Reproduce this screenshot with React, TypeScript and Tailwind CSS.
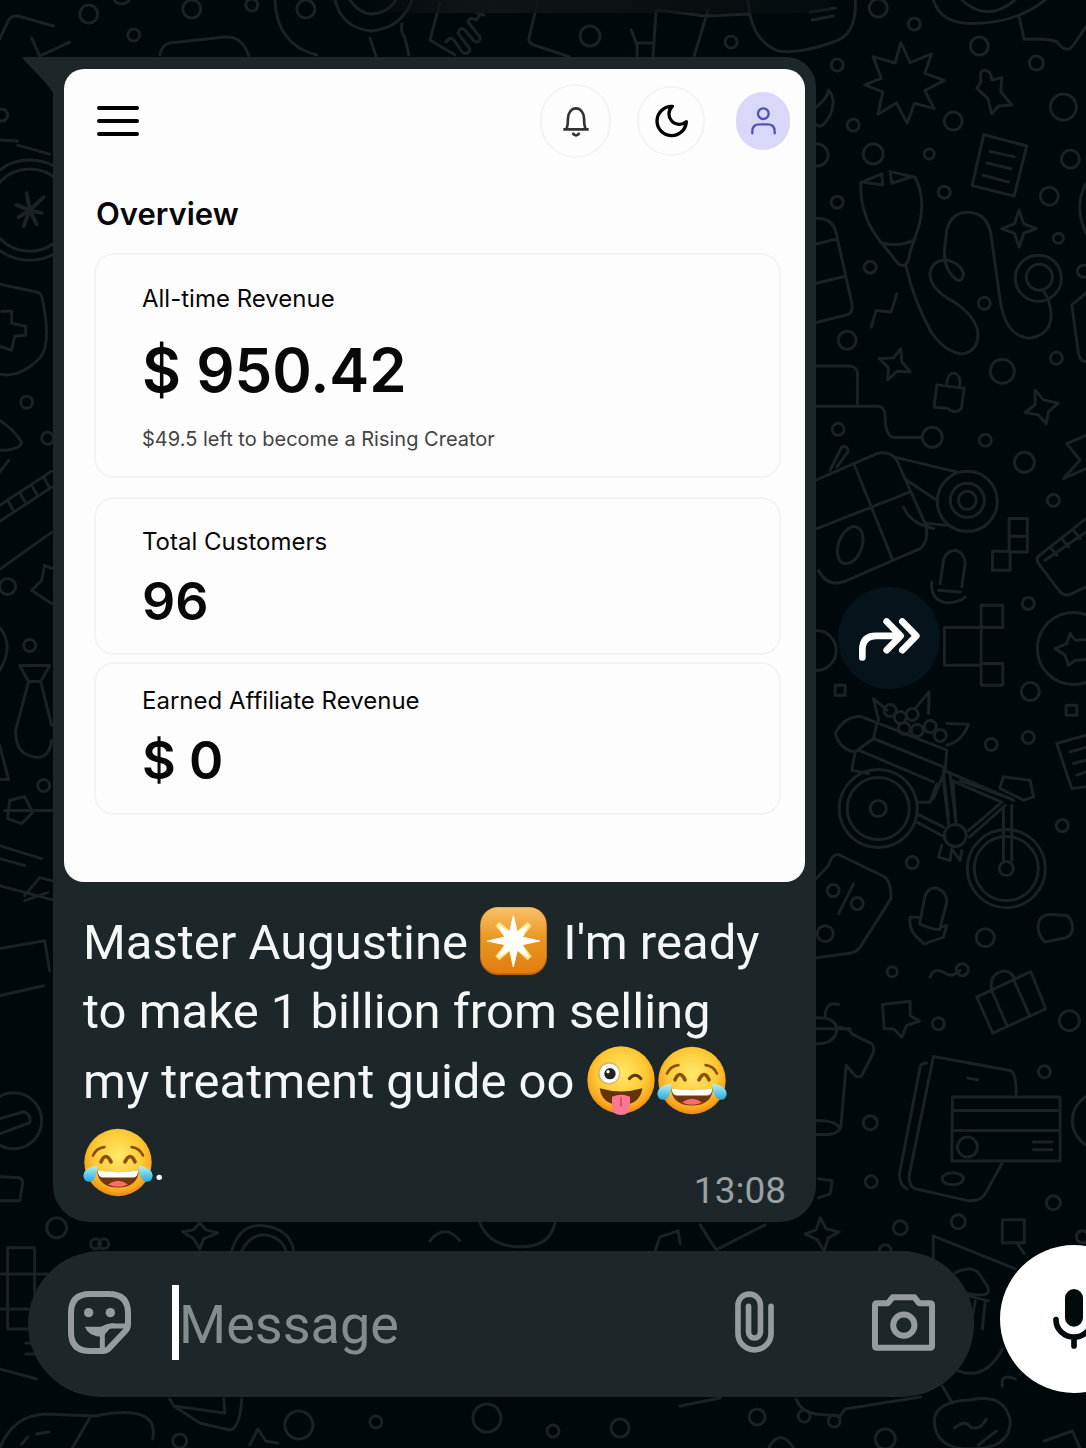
import * as React from "react";

interface StatCardProps {
  label: string;
  value: string;
  note?: string;
  className: string;
  valueClassName: string;
}

export default function App() {
  return (
    <main className="relative isolate flex min-h-screen flex-col overflow-hidden bg-[#01080b] pt-[57px] pb-[52px] font-[Roboto,'Liberation_Sans',sans-serif]">
      <Wallpaper />

      <section className="flex items-center gap-[22px] pr-[146px] pl-[53px]">
        <article className="relative min-w-0 flex-1 rounded-b-[36px] rounded-tr-[30px] bg-[#1d2729] px-[11px] pt-3">
          <svg
            className="absolute top-0 -left-[31px] h-[38px] w-[32px]"
            viewBox="0 0 32 38"
            aria-hidden="true"
          >
            <path d="M1 0H32V38Q28 30 20 22L4 5Q0 1 1 0Z" fill="#1d2729" />
          </svg>
          <Dashboard />
          <Message />
        </article>

        <button
          type="button"
          aria-label="Forward"
          className="mb-1 flex size-[102px] shrink-0 items-center justify-center rounded-full bg-[#06131b] pt-1"
        >
          <svg className="h-[43px] w-[61px]" viewBox="0 0 183 128" fill="none">
            <path
              d="M10 118V95Q10 53 52 53H122M83 10L125 53 83 96M130 10L172 53 130 96"
              stroke="#fff"
              strokeWidth="20"
              strokeLinecap="round"
              strokeLinejoin="round"
            />
          </svg>
        </button>
      </section>

      <Composer />
    </main>
  );
}

const Dashboard = () => {
  return (
    <div className="rounded-[20px] bg-[#fdfdfd] pt-[15px] pr-6 pb-[67px] pl-[30px] font-[Inter,'Liberation_Sans',sans-serif] text-[#080808]">
      <header className="-mr-[9px] flex items-center">
        <button type="button" aria-label="Menu" className="ml-[3px]">
          <svg className="h-8 w-[42px]" viewBox="0 0 42 32">
            <path
              d="M2 3H40M2 16H40M2 29H40"
              stroke="#000"
              strokeWidth="4"
              strokeLinecap="round"
            />
          </svg>
        </button>
        <button
          type="button"
          aria-label="Notifications"
          className="ml-auto flex h-[74px] w-[71px] items-center justify-center rounded-full border-2 border-[#f4f4f4]"
        >
          <svg className="h-8 w-7" viewBox="0 0 84 96" fill="none">
            <path
              d="M4 73H80M14 71Q18 60 18 40A24 30 0 0 1 66 40Q66 60 70 71"
              stroke="#333"
              strokeWidth="8"
            />
            <path d="M33 83Q34 91 42 91 50 91 51 83" stroke="#333" strokeWidth="8" />
          </svg>
        </button>
        <button
          type="button"
          aria-label="Dark mode"
          className="ml-[26px] flex h-[70px] w-[68px] items-center justify-center rounded-full border-2 border-[#f4f4f4]"
        >
          <svg className="h-[34px] w-[33px]" viewBox="0 0 99 102" fill="none">
            <path
              d="M52 7A44 44 0 1 0 94 53A30 30 0 1 1 52 7Z"
              stroke="#000"
              strokeWidth="10"
              strokeLinejoin="round"
            />
          </svg>
        </button>
        <button
          type="button"
          aria-label="Account"
          className="ml-[31px] flex h-[58px] w-[54px] items-center justify-center rounded-full bg-[#d9d8f8]"
        >
          <svg className="h-7 w-[25px]" viewBox="0 0 75 84" fill="none">
            <g stroke="#5254b5" strokeWidth="7" strokeLinecap="round">
              <ellipse cx="37" cy="20" rx="16" ry="16" />
              <path d="M4 79V73Q4 52 25 52H50Q71 52 71 73V79" />
            </g>
          </svg>
        </button>
      </header>

      <h1 className="mt-[36px] mb-[19px] ml-[2px] text-[31px] leading-10 font-semibold">
        Overview
      </h1>

      <StatCard
        label="All-time Revenue"
        value="$ 950.42"
        note="$49.5 left to become a Rising Creator"
        className="pt-7 pb-[23px]"
        valueClassName="mt-[19px] text-[60px] leading-[72px]"
      />
      <StatCard
        label="Total Customers"
        value="96"
        className="mt-[19px] pt-[27px] pb-[21px]"
        valueClassName="mt-[14px] text-[52px] leading-[60px]"
      />
      <StatCard
        label="Earned Affiliate Revenue"
        value="$ 0"
        className="mt-[7px] pt-[21px] pb-[22px]"
        valueClassName="mt-[14px] text-[52px] leading-[60px]"
      />
    </div>
  );
};

const StatCard = (props: StatCardProps) => {
  return (
    <section
      className={`rounded-[20px] border-2 border-[#f4f4f4] px-[46px] ${props.className}`}
    >
      <h2 className="text-[24px] leading-8">{props.label}</h2>
      <p className={`font-semibold ${props.valueClassName}`}>{props.value}</p>
      {props.note && (
        <p className="mt-[19px] text-[20px] leading-7 text-[#444]">{props.note}</p>
      )}
    </section>
  );
};

const Message = () => {
  return (
    <div className="pt-[25px] pr-[19px] pb-[9px] pl-[19px] text-[#f5f7f7]">
      <p className="text-[49px] leading-[69px]">
        Master Augustine <StarEmoji /> I'm ready
        <br />
        to make 1 billion from selling
        <br />
        my treatment guide oo <WinkEmoji />
        <JoyEmoji />
      </p>
      <div className="mt-3 flex justify-between">
        <p className="text-[49px] leading-[69px]">
          <JoyEmoji />.
        </p>
        <time className="mt-[41px] text-[37px] leading-[44px] text-[#9aa1a3]">13:08</time>
      </div>
    </div>
  );
};

const Composer = () => {
  return (
    <form
      className="mt-[29px] flex items-center pl-7"
      onSubmit={(e) => e.preventDefault()}
    >
      <div className="flex h-[146px] min-w-0 flex-1 items-center rounded-full bg-[#1d2729] pr-[39px] pb-1 pl-10">
        <button type="button" aria-label="Stickers" className="shrink-0">
          <svg className="size-[63px]" viewBox="0 0 189 189" fill="none">
            <g stroke="#969c9e" strokeWidth="18" strokeLinejoin="round">
              <path d="M66 9H122Q180 9 180 66V98Q180 112 172 120L125 170Q117 180 105 180H66Q9 180 9 122V66Q9 9 66 9Z" />
              <path d="M103 178V134Q103 105 132 105H178" strokeWidth="15" />
            </g>
            <path
              d="M50 107H98Q125 96 140 97L104 137Q62 137 50 107Z"
              fill="#969c9e"
            />
            <circle cx="62" cy="65" r="14" fill="#969c9e" />
            <circle cx="127" cy="65" r="14" fill="#969c9e" />
          </svg>
        </button>
        <span className="ml-[41px] h-[75px] w-[7px] shrink-0 bg-white" />
        <input
          type="text"
          aria-label="Message"
          placeholder="Message"
          className="h-[75px] min-w-0 flex-1 bg-transparent pt-1 text-[54px] text-white outline-none placeholder:text-[#858c8e]"
        />
        <button type="button" aria-label="Attach" className="shrink-0">
          <svg className="h-[62px] w-[39px]" viewBox="0 0 118 187" fill="none">
            <path
              d="M109 46V128A50 50 0 0 1 9 128V43A34 34 0 0 1 77 43V124A18 18 0 0 1 41 124V46"
              stroke="#969c9e"
              strokeWidth="17"
              strokeLinecap="round"
            />
          </svg>
        </button>
        <button type="button" aria-label="Camera" className="ml-[98px] shrink-0">
          <svg className="h-[57px] w-[63px]" viewBox="0 0 190 170" fill="none">
            <g stroke="#969c9e" strokeWidth="18" strokeLinejoin="round">
              <path d="M15 27H48L62 9H128L142 27H175Q181 27 181 33V155Q181 161 175 161H15Q9 161 9 155V33Q9 27 15 27Z" />
              <circle cx="96" cy="93" r="32" />
            </g>
          </svg>
        </button>
      </div>

      <button
        type="button"
        aria-label="Record voice message"
        className="-mt-[10px] -mr-[62px] ml-[26px] flex size-[148px] shrink-0 items-center justify-center rounded-full bg-white"
      >
        <svg className="h-[60px] w-[42px]" viewBox="0 0 126 180" fill="none">
          <rect x="36" y="0" width="54" height="113" rx="27" fill="#030a0c" />
          <path
            d="M9 92A54 52 0 0 0 117 92M63 144V171"
            stroke="#030a0c"
            strokeWidth="17"
            strokeLinecap="round"
          />
        </svg>
      </button>
    </form>
  );
};

const StarEmoji = () => (
  <svg
    role="img"
    aria-label="Eight-pointed star"
    className="mr-1 inline-block h-[68px] w-[67px] align-[-16px]"
    viewBox="0 0 201 204"
  >
    <rect width="201" height="204" rx="54" fill="#b9640f" />
    <rect x="2" y="1" width="197" height="198" rx="52" fill="url(#tile)" />
    <path d="M46 56L58 44 101 81 143 44 155 56 118 101 155 148 143 160 101 122 58 160 46 148 83 101Z" fill="#ffe27a" />
    <path
      d="M100 26L112 76 146 53 127 90 179 102 127 113 146 151 112 129 100 180 89 129 54 151 75 113 22 102 75 90 54 53 89 76Z"
      fill="#fff"
      stroke="#fff"
      strokeWidth="3"
    />
  </svg>
);

const WinkEmoji = () => (
  <svg
    role="img"
    aria-label="Winking face with tongue"
    className="mr-[2px] inline-block h-[70px] w-[68px] align-[-18px]"
    viewBox="0 0 204 210"
  >
    <circle cx="102" cy="102" r="101" fill="url(#face)" />
    <circle cx="66" cy="82" r="34" fill="#c9a67c" opacity="0.6" />
    <circle cx="67" cy="82" r="29" fill="#fff" />
    <circle cx="69" cy="83" r="17" fill="#26201e" />
    <circle cx="63" cy="77" r="5" fill="#fff" />
    <path d="M127 98Q145 78 162 98" stroke="#63370a" strokeWidth="9" strokeLinecap="round" fill="none" />
    <path d="M38 127Q102 146 166 127Q160 176 102 178Q44 176 38 127Z" fill="#63330b" />
    <path d="M75 152Q102 140 129 152V182Q127 207 102 207Q77 207 75 182Z" fill="#fb7892" />
    <path d="M102 155V180" stroke="#d84868" strokeWidth="5" strokeLinecap="round" />
  </svg>
);

const JoyEmoji = () => (
  <svg
    role="img"
    aria-label="Face with tears of joy"
    className="inline-block h-[69px] w-[70px] align-[-17px]"
    viewBox="0 0 210 206"
  >
    <circle cx="105" cy="103" r="101" fill="url(#face)" />
    <g stroke="#87510d" fill="none" strokeLinecap="round">
      <path d="M30 82Q40 60 64 57M180 82Q170 60 146 57" strokeWidth="8" />
      <path d="M54 101Q68 69 84 101M126 101Q142 69 156 101" strokeWidth="11" />
    </g>
    <path d="M42 126Q105 140 168 126Q164 177 105 178Q46 177 42 126Z" fill="#71370d" />
    <path d="M43 126Q105 138 167 126Q165 148 148 148H62Q45 148 43 126Z" fill="#fff" />
    <path d="M75 169Q105 147 135 169Q105 183 75 169Z" fill="#fb6d6a" />
    <path d="M43 112Q3 118 1 142Q2 161 20 161Q41 158 43 112Z" fill="url(#tear)" />
    <path d="M167 112Q207 118 209 142Q208 161 190 161Q169 158 167 112Z" fill="url(#tear)" />
  </svg>
);

// Small dots scattered between the doodles: x, y, radius
const dots = [
  [89, 14, 9], [122, -5, 9], [134, 35, 6], [192, 9, 9], [252, 5, 6], [306, 9, 9],
  [2, 115, 6], [27, 402, 6], [48, 438, 6], [30, 645, 6], [44, 785, 6], [8, 586, 8],
  [590, 36, 10], [731, 42, 6], [878, 8, 9], [914, 24, 6], [979, 46, 9], [1036, 63, 7],
  [837, 65, 6], [953, 121, 9], [1063, 107, 13], [853, 125, 6], [873, 154, 10],
  [1070, 159, 9], [929, 154, 5], [944, 192, 6], [1049, 196, 9], [837, 202, 6],
  [870, 267, 6], [1058, 238, 5], [1038, 278, 23], [1039, 277, 13], [1083, 271, 6],
  [984, 303, 6], [847, 340, 9], [1056, 358, 6], [1002, 371, 12], [817, 155, 11],
  [838, 429, 6], [932, 437, 10], [985, 440, 6], [1024, 462, 10], [1053, 500, 6],
  [967, 501, 30], [967, 500, 17], [967, 500, 9], [1028, 603, 6], [1073, 648, 36],
  [1030, 691, 9], [991, 744, 6], [1028, 737, 6], [816, 650, 20],
  [878, 808, 39], [878, 808, 31], [878, 808, 8], [1006, 868, 39], [1006, 868, 32],
  [1006, 868, 7], [955, 835, 11], [912, 862, 6], [1062, 825, 6], [985, 937, 9],
  [833, 890, 6], [857, 903, 6], [825, 933, 8], [892, 971, 5], [962, 969, 6],
  [938, 1023, 6], [1069, 1020, 10], [1044, 1071, 6], [870, 1122, 7],
  [1100, 1120, 28], [871, 1181, 6], [57, 1227, 10], [96, 1243, 5],
  [104, 1243, 5], [900, 1227, 7], [958, 1221, 7], [1053, 1202, 7], [885, 1250, 6],
  [1082, 1236, 6], [757, 1416, 8], [804, 1415, 6], [834, 1420, 6], [885, 1438, 10],
  [180, 1440, 7], [299, 1424, 14], [376, 1421, 6], [487, 1417, 14], [553, 1430, 6],
  [620, 1427, 9], [30, 210, 50], [30, 210, 41], [14, 1120, 28],
  [890, 710, 6], [900, 717, 6], [912, 714, 6], [904, 728, 6], [917, 730, 6], [930, 726, 6], [940, 735, 6],
];

const Wallpaper = () => {
  return (
    <svg
      className="absolute inset-0 -z-10 h-full w-full"
      viewBox="0 0 1086 1448"
      preserveAspectRatio="xMidYMid slice"
      fill="none"
      aria-hidden="true"
    >
      <defs>
        <radialGradient id="face" cx="0.5" cy="0.4" r="0.62">
          <stop offset="0" stopColor="#ffe96b" />
          <stop offset="0.6" stopColor="#fdc934" />
          <stop offset="0.85" stopColor="#f8a41d" />
          <stop offset="1" stopColor="#e87d0c" />
        </radialGradient>
        <linearGradient id="tile" x1="0" y1="0" x2="0" y2="1">
          <stop offset="0" stopColor="#f9c06a" />
          <stop offset="0.5" stopColor="#e8951f" />
          <stop offset="1" stopColor="#e27c12" />
        </linearGradient>
        <linearGradient id="tear" x1="0" y1="0" x2="0" y2="1">
          <stop offset="0" stopColor="#b9f3f6" />
          <stop offset="1" stopColor="#27a9df" />
        </linearGradient>
        <linearGradient id="shade" x1="0" y1="0" x2="1" y2="0">
          <stop offset="0" stopColor="#111415" stopOpacity="0" />
          <stop offset="0.2" stopColor="#111415" />
          <stop offset="1" stopColor="#0b1210" stopOpacity="0.4" />
        </linearGradient>
      </defs>

      <g stroke="#1b2124" strokeWidth="3" strokeLinecap="round" strokeLinejoin="round">
        {dots.map(([x, y, r], i) => (
          <circle key={i} cx={x} cy={y} r={r} />
        ))}

        {/* top edge */}
        <path d="M0 39L9 20Q13 14 22 17L54 26M160 55Q162 45 170 43L225 37Q243 36 249 56M275 0Q277 45 317 55M335 0Q342 28 371 31 402 28 412 0M350 0Q360 14 372 14 388 13 396 0M370 38L376 56M402 24Q400 30 405 38L409 55" />
        <path d="M440 3L430 40 455 55M446 42Q450 36 454 40L462 52Q468 56 470 49L458 33Q460 26 465 30L474 41Q480 44 480 37L468 22Q470 16 476 20L488 5M462 8L484 15M538 0L529 38Q528 43 534 45L570 57M656 10L653 56M658 10L705 16 750 14M708 10L694 56M631 30L637 45V56M637 43H652M748 0Q750 40 778 51 800 54 833 42 857 35 855 0M810 12L835 8M812 20L833 16" />
        <path d="M0 140L18 141M18 145L50 154M32 38L40 56 70 42" />

        {/* left edge */}
        <path d="M30 210L17 205M30 210L19 217M30 210L24 226M30 210L37 224M30 210L42 213M30 210L44 197M30 210L27 193" strokeWidth="4" />
        <path d="M0 284L38 292Q42 293 43 300 52 345 40 358 20 378 0 374M2 311H12V323L26 326V335L15 336 12 350 0 346" />
        <path d="M0 420Q15 430 22 442 20 450 0 450M0 472L9 460M0 505L52 471M0 521L52 487M8 500l5 9M20 492l5 9M32 485l5 9M44 477l5 9M0 569L52 532M52 568L45 565 42 580 32 590 52 603M0 627Q15 645 0 670" />
        <path d="M20 665H50L41 681H29ZM29 681L16 730Q15 755 38 757 50 756 52 740M41 681L52 725M0 745L9 779H0M5 810H52M10 800L25 796 33 812 22 823 8 818ZM0 845L42 858M0 858L25 865M0 885L52 899M25 895L40 877 52 880M25 900L48 892M0 948L45 940 50 970M0 995L44 985" />
        <path d="M0 1118L24 1111Q32 1114 30 1122L0 1133M0 1176L20 1177Q23 1178 23 1183L20 1200H0M8 1247H35V1328H8ZM0 1273H48M0 1308H28M26 1342H40V1353H26" />
        <path d="M0 1368L37 1378M0 1448Q12 1415 45 1413L95 1415Q160 1402 153 1438M90 1417L72 1448M22 1443l6-7M37 1433l12-2M170 1398L174 1405 200 1422 230 1429Q240 1428 242 1398M174 1405L225 1412 224 1398M250 1444L258 1428 266 1440 278 1442" />
        <path d="M183 1231L194 1229 200 1222 206 1229 218 1232 204 1238 200 1248 194 1238ZM232 1250Q240 1222 264 1225 290 1228 294 1250M242 1250Q250 1234 264 1234 282 1236 286 1250M480 1222Q490 1246 520 1246 550 1246 555 1222M655 1250L660 1236 678 1230 680 1243M700 1224L716 1249 765 1224M430 1240Q445 1222 460 1240" />

        {/* right column, upper half */}
        <g transform="translate(800 0) scale(0.333)" strokeWidth="9">
          <path d="M302 128L330 188 394 162 374 220 433 241 374 272 402 326 343 310 321 370 289 309 233 343 248 276 194 255 243 235 219 170 285 189Z" />
          <path d="M551 404L680 438 642 588 516 557ZM570 455l72 15M560 489l72 17M549 526l76 20" />
          <path d="M245 522L182 548Q178 650 245 730L295 792Q315 805 325 780 327 760 345 712 385 610 345 532L270 515 275 550 330 532M245 522L248 555 190 547M250 730Q300 742 345 718M318 800Q340 900 395 1000 440 1062 490 1062 540 1050 532 990 520 945 460 905 385 865 390 815 400 778 440 780 480 790 490 820 490 845 470 840 430 810 433 750L440 690Q455 635 505 637 560 640 572 700L600 900Q615 1010 690 1015 775 1000 745 900L728 868" />
          <path d="M657 630L671 672 709 686 671 700 657 742 643 700 605 686 643 672ZM213 982L228 932 273 936 290 882M237 1076L280 1074 302 1046 305 1085 330 1116 292 1114 262 1140 265 1104Z" />
          <path d="M543 245Q535 210 555 210 575 215 575 240L605 233 602 275 635 315 595 318 575 342 563 295 530 265Z" />
          <path d="M400 0Q420 65 500 70 640 75 735 0M485 0Q560 70 645 0M657 50L672 118Q740 115 770 125 800 165 820 135L858 80" />
          <path d="M50 320Q85 290 85 270 110 300 90 345 65 390 50 375M48 655Q100 655 108 700L155 910Q160 940 140 945L48 968M48 732L108 718M48 850L133 830M48 1098H148Q175 1100 172 1130V1215M858 880L815 915 835 1060Q840 1085 858 1085M858 550Q820 620 858 700" />
          <path d="M440 1150Q445 1115 465 1120 485 1130 478 1160M410 1155L492 1165 484 1225Q470 1245 440 1225L402 1222ZM705 1170L730 1200 775 1210 745 1235 738 1272 715 1245 675 1238 705 1215Z" />
        </g>

        {/* right column, basket and trolley */}
        <g transform="translate(800 400) scale(0.333)" strokeWidth="9">
          <path d="M48 18H235Q255 20 255 50 255 110 285 112H365M50 238L230 160Q270 150 290 180L375 370Q390 420 360 445L130 545Q80 560 55 510M163 195L278 480M50 385L330 275M290 172L470 215M320 240L410 300M380 370L440 375M90 210L125 140Q145 135 143 155L110 200M310 320Q330 370 400 385" />
          <ellipse cx="150" cy="435" rx="35" ry="58" transform="rotate(20 150 435)" />
          <path d="M627 355H682V455H627ZM627 408H682M577 453H630V510H577ZM420 550L430 480Q440 450 467 450 495 460 495 490L485 560M395 545Q390 600 440 608 485 605 495 590M415 570L480 575" />
          <path d="M433 682H543V795H433ZM543 615H608V682H543ZM543 790H608V855H543ZM543 682V790M858 355L725 460Q705 470 715 490L780 575Q795 590 815 580L858 560M735 480L858 395M750 440l20 25M785 415l20 25M820 390l20 25M858 105L800 130 840 180 790 235 858 205" />
          <path d="M810 700L825 720 858 718M810 700L800 730 765 745 795 765 805 795 825 780 858 778M105 855H135V885H105ZM798 915H830V945H798ZM858 1005L770 1030 815 1165 858 1160M810 1055L858 1042M820 1090L858 1080M830 1125L858 1115" />
          <path d="M235 960L220 895 260 930M345 925L387 875 385 940M440 970L505 972Q485 1025 440 1035M105 1000Q130 950 180 948L440 1050 435 1110 400 1195M105 1000Q120 1050 165 1055L220 1015 430 1100M230 970L220 1015M165 1055L155 1110 205 1120M175 1050L400 1145" />
          <path d="M430 1110L640 1200M450 1125L465 1250M430 1120L445 1250M600 1160L610 1130 690 1140 700 1190 670 1200 600 1165" />
        </g>

        {/* right column, lower half */}
        <g transform="translate(800 780) scale(0.333)" strokeWidth="9">
          <path d="M350 100L430 140M350 125L425 165M455 0L605 65 505 150M480 0L635 55M615 75L508 170M610 85V240M635 75V240M430 0L445 130M458 0L468 130M355 65H390L410 10M425 195L415 230 450 240 455 205 480 240 485 210" />
          <path d="M48 295L85 255Q95 220 115 222L255 290Q275 310 272 355L180 500Q170 515 150 518L48 532M160 310L115 400M358 430L375 345Q390 315 415 325 440 335 440 365L418 448Q390 445 358 430ZM355 410H330Q325 440 345 465L372 490 430 470 440 435 420 440" />
          <path d="M735 485Q710 460 715 430 720 400 755 402L800 405Q820 420 817 450 810 475 780 475ZM390 590Q400 560 430 575 455 595 480 570" />
          <path d="M530 650L692 573 737 685 578 758ZM575 630Q565 580 610 572 630 570 645 595M575 630L620 735M640 595L688 705M247 672L330 662V705L358 722 320 735 305 770 280 745H252Z" />
          <path d="M48 712Q100 710 110 740 110 790 48 790M48 745H150M75 710Q75 660 115 672M120 740Q150 745 155 760L215 790Q225 800 218 820L185 885Q175 895 165 885L138 855 122 1040Q115 1060 85 1062L48 1062M48 1020Q110 1020 120 1045" />
          <path d="M380 848Q362 848 360 860L298 1180Q298 1215 320 1225M400 828L330 1170Q320 1215 345 1225L500 1260Q540 1265 555 1240L605 1150M400 828L630 870Q650 880 648 945M503 893L533 898" />
          <path d="M457 950H780V1142H455ZM457 990H780M457 1050H780M700 1085H755M700 1108H755" />
          <circle cx="502" cy="1100" r="30" />
          <ellipse cx="458" cy="1195" rx="32" ry="18" />
        </g>

        {/* bottom right */}
        <path d="M805 1233L816 1229 820 1217 826 1228 839 1231 828 1237 824 1250 817 1239ZM818 1178L832 1180 830 1193 818 1197M1002 1219H1024V1242H1002ZM1018 1244L1024 1253M933 1258V1235L1015 1268M955 1272Q975 1262 982 1278 1000 1300 965 1292M968 1295L988 1300M975 1300L970 1328M985 1300L982 1328M958 1370Q985 1380 1002 1348M1002 1385Q1000 1372 1015 1378" />
        <path d="M680 1405L720 1397M796 1398Q800 1410 815 1413L840 1415 845 1408 920 1396M942 1385L952 1402M970 1399Q1005 1392 1010 1420 1010 1448 970 1448 935 1448 934 1420 935 1400 970 1399M954 1427Q965 1418 970 1426 980 1430 986 1418M978 1444L996 1430M1044 1440L1072 1430 1080 1448M768 1448Q780 1425 794 1448" />
      </g>
      <rect x="370" width="460" height="13" fill="url(#shade)" />
    </svg>
  );
};
